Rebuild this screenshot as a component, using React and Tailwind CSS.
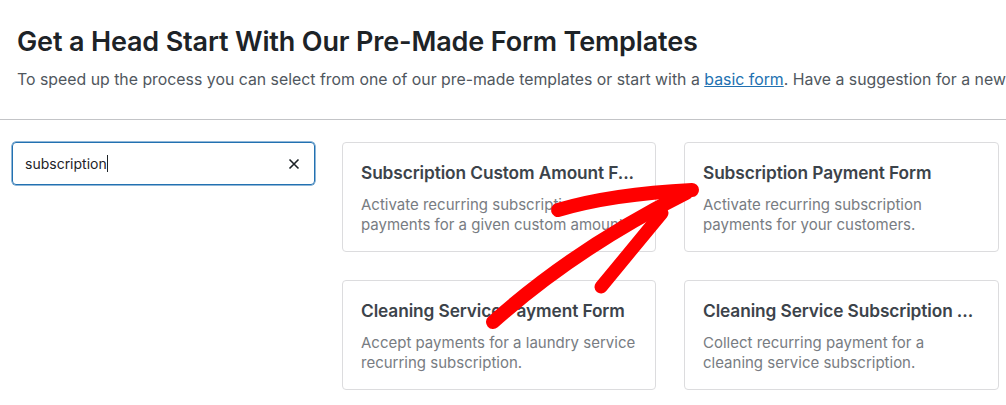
import React from "react";

const cards = [
  { t: "Subscription Custom Amount F...", d: "Activate recurring subscription payments for a given custom amount." },
  { t: "Subscription Payment Form", d: "Activate recurring subscription payments for your customers." },
  { t: "Cleaning Service Payment Form", d: "Accept payments for a laundry service recurring subscription." },
  { t: "Cleaning Service Subscription ...", d: "Collect recurring payment for a cleaning service subscription." },
];

export default function App() {
  return (
    <div className="relative w-[1006px] h-[405px] overflow-hidden bg-white" style={{ fontFamily: "Inter, 'Noto Sans', sans-serif" }}>
      <div className="pl-[17px] pt-[26px]">
        <h1 className="text-[27px] leading-[32px] font-semibold text-[#1d2327] tracking-[-0.15px]">
          Get a Head Start With Our Pre-Made Form Templates
        </h1>
        <p className="mt-[11px] text-[15.85px] leading-[22px] text-[#50575e] whitespace-nowrap">
          To speed up the process you can select from one of our pre-made templates or start with a{" "}
          <a className="text-[#2271b1] underline">basic form</a>. Have a suggestion for a new
        </p>
      </div>
      <div className="mt-[28px] h-px bg-[#c3c4c7]" />
      <div className="flex pl-[12px] pt-[22px]">
        <div className="w-[303px] h-[43px] border border-[#2271b1] rounded-[4px] flex items-center pl-[12px] pr-[14px] shadow-[0_0_0_0.5px_#2271b1]">
          <span className="text-[14px] text-[#1d2327]">subscription</span>
          <span className="w-px h-[17px] bg-[#1d2327]" />
          <svg className="ml-auto" width="12" height="12" viewBox="0 0 12 12">
            <path d="M1.5 1.5 L10.5 10.5 M10.5 1.5 L1.5 10.5" stroke="#1d2327" strokeWidth="1.6" />
          </svg>
        </div>
        <div className="ml-[27px] grid grid-cols-[314px_315px] gap-x-[28px] gap-y-[28px]">
          {cards.map((c, i) => (
            <div key={i} className="h-[110px] border border-[#dcdcde] rounded-[4px] pl-[18px] pr-[12px] pt-[19px]">
              <div className="text-[17.3px] leading-[22px] font-semibold text-[#3c434a] whitespace-nowrap tracking-[-0.1px]">{c.t}</div>
              <div className="mt-[11px] pr-[6px] text-[15px] leading-[20px] text-[#787c82]">{c.d}</div>
            </div>
          ))}
        </div>
      </div>
      <svg className="absolute inset-0 pointer-events-none" width="1006" height="405">
        <g fill="none" stroke="#ff0000" strokeLinecap="round" strokeLinejoin="round">
          <path d="M493 322 C 540 280, 600 236, 686 193" strokeWidth="14" />
          <path d="M558 210 Q 612 194 692 190" strokeWidth="14" />
          <path d="M601 287 L 662 213" strokeWidth="13" />
        </g>
      </svg>
    </div>
  );
}
